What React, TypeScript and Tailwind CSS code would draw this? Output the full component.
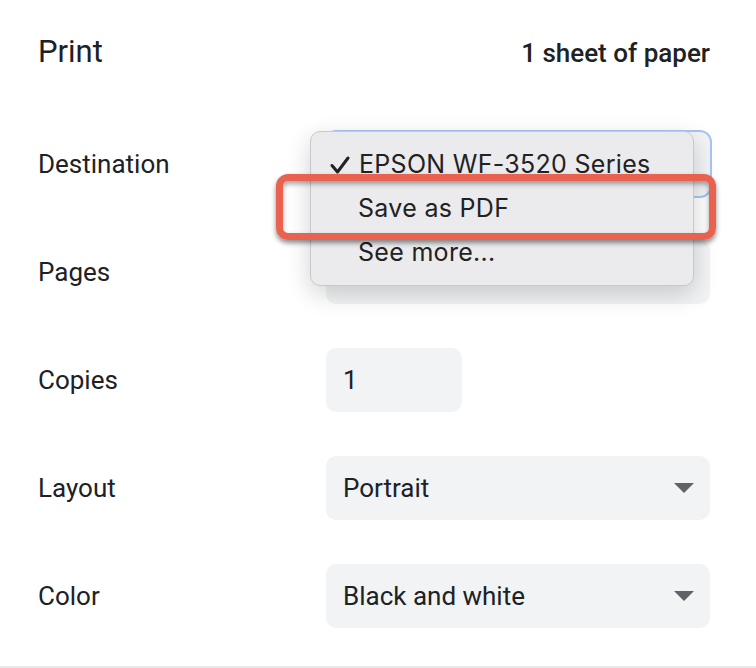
const rows = [
  { label: 'Destination', kind: 'dest' },
  { label: 'Pages', kind: 'select' },
  { label: 'Copies', kind: 'copies' },
  { label: 'Layout', kind: 'select', value: 'Portrait' },
  { label: 'Color', kind: 'select', value: 'Black and white' },
];

function Caret() {
  return (
    <svg width="20" height="10" viewBox="0 0 20 10" className="shrink-0">
      <path d="M0 0 L20 0 L10 10 Z" fill="#5f6368" />
    </svg>
  );
}

function Field({ kind, value }: { kind: string; value?: string }) {
  if (kind === 'copies') {
    return (
      <div className="flex h-16 w-[136px] items-center rounded-[10px] bg-[#f1f3f4] pl-[17px] text-[26px] text-[#202124]">
        1
      </div>
    );
  }
  if (kind === 'dest') {
    return (
      <div className="h-16 w-[384px] rounded-[10px] bg-[#f1f3f4] outline-2 outline-[#a8c4f4]" />
    );
  }
  return (
    <div className="flex h-16 w-[384px] items-center justify-between rounded-[10px] bg-[#f1f3f4] pl-[17px] pr-4 text-[26px] text-[#202124]">
      <span>{value}</span>
      <Caret />
    </div>
  );
}

export default function App() {
  return (
    <div className="relative h-[668px] w-[756px] overflow-hidden bg-white font-['Roboto',sans-serif]">
      {/* Header */}
      <div className="flex items-baseline justify-between pl-[38px] pr-[46px] pt-[33px]">
        <h1 className="text-[31px] leading-[38px] text-[#202124]">Print</h1>
        <span className="text-[26px] font-medium text-[#202124]">1 sheet of paper</span>
      </div>

      {/* Settings */}
      <div className="mt-[59px] flex flex-col gap-[44px]">
        {rows.map((row) => (
          <div key={row.label} className="flex h-16 items-center">
            <div className="w-[326px] pl-[38px] text-[26px] text-[#202124]">{row.label}</div>
            <Field kind={row.kind} value={row.value} />
          </div>
        ))}
      </div>

      <div className="absolute bottom-0 left-0 h-[2px] w-full bg-[#e8eaed]" />

      {/* Native destination menu */}
      <div className="absolute left-[310px] top-[131px] w-[384px] rounded-[10px] border border-[#c9c9cb] bg-[#ebebed] pb-[10px] pt-[11px] font-['Inter',sans-serif] text-[25px] tracking-[0.3px] text-[#222] shadow-[0_8px_24px_rgba(0,0,0,0.18)]">
        <div className="flex h-11 items-center">
          <svg width="20" height="18" viewBox="0 0 20 18" className="ml-[19px] mr-[9px] shrink-0">
            <path d="M2 9.5 L7.5 16 L18 2" fill="none" stroke="#222" strokeWidth="3" strokeLinecap="round" strokeLinejoin="round" />
          </svg>
          <span>EPSON WF-3520 Series</span>
        </div>
        <div className="flex h-11 items-center pl-[47px]">Save as PDF</div>
        <div className="flex h-11 items-center pl-[47px]">See more...</div>
      </div>

      {/* Highlight */}
      <div className="absolute left-[276px] top-[174px] h-[66px] w-[440px] rounded-[12px] border-[7px] border-[#e8624f] shadow-[0_3px_5px_rgba(0,0,0,0.45),inset_0_3px_5px_rgba(0,0,0,0.35)]" />
    </div>
  );
}
